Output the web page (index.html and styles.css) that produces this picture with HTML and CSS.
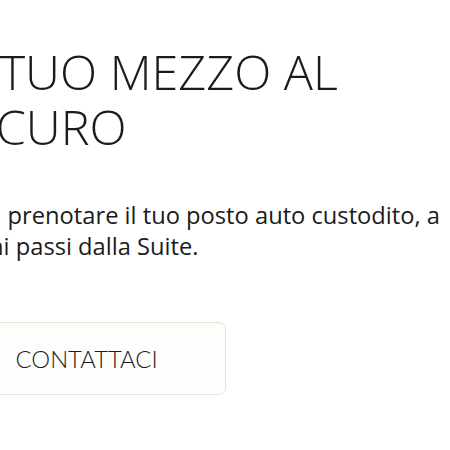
FILE: index.html
```html
<!DOCTYPE html>
<html lang="it">
<head>
<meta charset="utf-8">
<link rel="stylesheet" href="styles.css">
</head>
<body>
<main class="page">
  <h1 class="title">IL TUO MEZZO AL<br>SICURO</h1>
  <p class="text">Contattaci per&nbsp; prenotare il tuo posto auto custodito, a<br>pochi passi dalla Suite.</p>
  <a class="btn" href="#">CONTATTACI</a>
</main>
</body>
</html>
```

FILE: styles.css
```css
html, body {
  margin: 0;
  padding: 0;
  background: #ffffff;
  overflow: hidden;
  width: 450px;
  height: 450px;
}
.page {
  margin-left: -43px;
  padding-top: 44px;
  width: 700px;
  display: flex;
  flex-direction: column;
  align-items: flex-start;
  color: #1b1b1b;
}
.title {
  margin: 0;
  font-family: "Open Sans", sans-serif;
  font-weight: 300;
  font-size: 48.5px;
  line-height: 55px;
  text-indent: -7px;
  white-space: nowrap;
}
.text {
  margin: 46px 0 0 -8px;
  font-family: "Open Sans", sans-serif;
  font-weight: 400;
  font-size: 23.7px;
  line-height: 31px;
  text-indent: -110px;
  white-space: nowrap;
}
.btn {
  margin: 60px 0 0 3px;
  box-sizing: border-box;
  height: 73px;
  display: flex;
  align-items: center;
  padding: 0 67px 0 54.5px;
  border: 1.5px solid #e4e2da;
  border-radius: 7px;
  background: #fdfdfb;
  color: #1b1b1b;
  text-decoration: none;
  font-family: "Lato", sans-serif;
  font-weight: 300;
  font-size: 23.8px;
  white-space: nowrap;
}
```
